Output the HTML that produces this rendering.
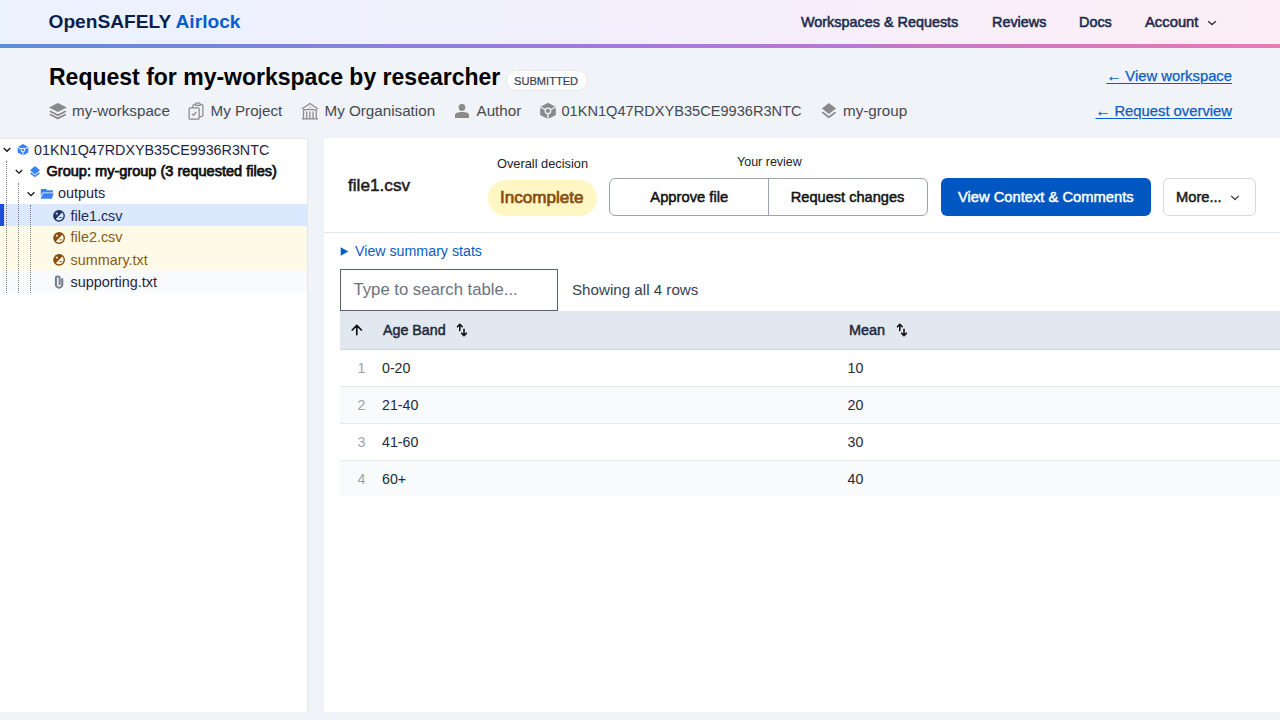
<!DOCTYPE html>
<html><head><meta charset="utf-8">
<style>
*{margin:0;padding:0;box-sizing:border-box}
html,body{width:1280px;height:720px;overflow:hidden;background:#f0f3f8;font-family:"Liberation Sans",sans-serif;position:relative}
.a{position:absolute}
.t{position:absolute;white-space:nowrap;line-height:20px}
.b{font-weight:bold}
#hdr{left:0;top:0;width:1280px;height:44px;background:linear-gradient(90deg,#eaf2fe 0%,#f3effc 50%,#fdeef6 100%)}
#hline{left:0;top:44px;width:1280px;height:4px;background:linear-gradient(90deg,#5a8fd6 0%,#a877db 50%,#e87ab4 100%)}
.nav{font-size:14.4px;color:#1c2b4d;-webkit-text-stroke:0.55px #1c2b4d}
.meta{font-size:15.2px;color:#464850}
.lnk{font-size:14.8px;color:#0b5cc4;text-decoration:underline;text-underline-offset:1.5px;text-decoration-thickness:1.4px;-webkit-text-stroke:0.25px #0b5cc4}
#lp{left:0;top:138px;width:308px;height:574px;background:#fff;border-top:1px solid #e2e5ea;border-right:1px solid #e2e5ea}
#mp{left:324px;top:138px;width:956px;height:574px;background:#fff}
.row{position:absolute;left:0;width:307px;height:22px}
.tr{font-size:14.4px;color:#1e2540}
.dot{position:absolute;width:1px;border-left:1px dotted #777a80}
</style></head><body>
<div id="hdr" class="a"></div>
<div id="hline" class="a"></div>
<div class="t b" style="left:48.5px;top:12.2px;font-size:19.16px;color:#0c1f4a">OpenSAFELY <span style="color:#0a5ad0">Airlock</span></div>
<div class="t nav" style="left:801px;top:11.6px">Workspaces &amp; Requests</div>
<div class="t nav" style="left:992px;top:11.6px">Reviews</div>
<div class="t nav" style="left:1079px;top:11.6px">Docs</div>
<div class="t nav" style="left:1145px;top:11.6px;font-size:14.8px">Account</div>
<svg class="a" style="left:1207px;top:19px" width="10" height="8" viewBox="0 0 10 8"><path d="M1.2 2.2 L5 5.6 L8.8 2.2" fill="none" stroke="#333" stroke-width="1.35"/></svg>

<div class="t b" style="left:49px;top:66.8px;font-size:23px;color:#000">Request for my-workspace by researcher</div>
<div class="a" style="left:505.5px;top:70.2px;width:82px;height:21.3px;background:#fff;border:1px solid #e3e6eb;border-radius:11px"></div>
<div class="t" style="left:514px;top:70.8px;font-size:11.1px;color:#334155;-webkit-text-stroke:0.2px #334155">SUBMITTED</div>

<div class="t meta" style="left:72px;top:100.7px">my-workspace</div>
<div class="t meta" style="left:210.5px;top:100.7px">My Project</div>
<div class="t meta" style="left:324.5px;top:100.7px">My Organisation</div>
<div class="t meta" style="left:476.5px;top:100.7px">Author</div>
<div class="t meta" style="left:561.5px;top:100.7px;font-size:14.6px">01KN1Q47RDXYB35CE9936R3NTC</div>
<div class="t meta" style="left:843px;top:100.7px">my-group</div>

<div class="t lnk" style="right:48px;top:65.8px">&larr; View workspace</div>
<div class="t lnk" style="right:48px;top:100.9px">&larr; Request overview</div>


<svg class="a" style="left:0;top:0" width="1280" height="720" viewBox="0 0 1280 720">
<g fill="#8a8a8a">
<polygon points="49,107.4 57.9,102.9 66.9,107.4 57.9,111.9"/>
</g>
<g fill="none" stroke="#8a8a8a" stroke-width="1.8" stroke-linecap="round" stroke-linejoin="round">
<polyline points="50.6,111.5 57.9,115.2 65.2,111.5"/>
<polyline points="50.6,114.7 57.9,118.4 65.2,114.7"/>
</g>
<g transform="translate(186,101) scale(0.8333)" fill="none" stroke="#8a8a8a" stroke-width="1.5" stroke-linecap="round" stroke-linejoin="round">
<path d="M11.35 3.836c-.065.21-.1.433-.1.664 0 .414.336.75.75.75h4.5a.75.75 0 0 0 .75-.75 2.25 2.25 0 0 0-.1-.664m-5.8 0A2.251 2.251 0 0 1 13.5 2.25H15c1.012 0 1.867.668 2.15 1.586m-5.8 0c-.376.023-.75.05-1.124.08C9.095 4.01 8.25 4.973 8.25 6.108V8.25m8.9-4.414c.376.023.75.05 1.124.08 1.131.094 1.976 1.057 1.976 2.192V16.5A2.25 2.25 0 0 1 18 18.75h-2.25m-7.5-10.5H4.875c-.621 0-1.125.504-1.125 1.125v11.25c0 .621.504 1.125 1.125 1.125h9.75c.621 0 1.125-.504 1.125-1.125V18.75m-7.5-10.5h6.375c.621 0 1.125.504 1.125 1.125v9.375m-8.25-3 1.5 1.5 3-3.75"/>
</g>
<g transform="translate(299.7,101) scale(0.851)" fill="none" stroke="#8a8a8a" stroke-width="1.5" stroke-linecap="round" stroke-linejoin="round">
<path d="M12 21v-8.25M15.75 21v-8.25M8.25 21v-8.25M3 9l9-6 9 6m-1.5 12V10.332A48.36 48.36 0 0 0 12 9.75c-2.551 0-5.056.2-7.5.582V21M3 21h18M12 6.75h.008v.008H12V6.75Z"/>
</g>
<g fill="#8a8a8a">
<ellipse cx="462" cy="107.4" rx="3.3" ry="3.4"/>
<path d="M455,118 L455,115.2 C455,113 457.5,111.9 462,111.9 C466.5,111.9 469,113 469,115.2 L469,118 Z"/>
</g>
<g>
<polygon fill="#8a8a8a" points="548,102.8 555.8,107 555.8,115 548,119 540.2,115 540.2,107"/>
<g stroke="#f0f3f8" stroke-width="1.4"><line x1="547.9" y1="111" x2="540.2" y2="107"/><line x1="547.9" y1="111" x2="555.8" y2="107"/><line x1="547.9" y1="111" x2="547.9" y2="119.5"/></g>
<circle cx="547.9" cy="110.9" r="3.4" fill="#f0f3f8"/>
<circle cx="547.9" cy="110.9" r="2.1" fill="#8a8a8a"/>
</g>
<g fill="#8a8a8a">
<polygon points="821.9,108.4 828.9,102.9 836.1,108.4 828.9,113.9"/>
</g>
<g fill="none" stroke="#8a8a8a" stroke-width="1.8" stroke-linecap="round" stroke-linejoin="round">
<polyline points="822.9,112.6 828.9,117.2 835,112.6"/>
</g>
</svg>

<div id="lp" class="a"></div>
<div id="mp" class="a"></div>

<div class="a" style="left:0;top:204px;width:307px;height:22px;background:#dbe8fd"></div>
<div class="a" style="left:0;top:204px;width:4px;height:22px;background:#1d4ed8"></div>
<div class="a" style="left:0;top:226px;width:307px;height:44px;background:#fefae8"></div>
<div class="a" style="left:0;top:270px;width:307px;height:22px;background:#f8fafc"></div>
<svg class="a" style="left:0;top:0" width="40" height="300" viewBox="0 0 40 300"><g stroke="#777a80" stroke-width="1" stroke-dasharray="1 1"><line x1="6.5" y1="162" x2="6.5" y2="293"/><line x1="18.5" y1="184" x2="18.5" y2="293"/><line x1="30.5" y1="206" x2="30.5" y2="293"/></g><g fill="#777a80"><rect x="6" y="161" width="1" height="1"/><rect x="18" y="183" width="1" height="1"/><rect x="30" y="205" width="1" height="1"/></g></svg>
<div class="t tr" style="left:34px;top:139.7px;font-size:14.3px">01KN1Q47RDXYB35CE9936R3NTC</div>
<div class="t tr" style="left:46.5px;top:161.3px;font-size:14.55px;color:#111;-webkit-text-stroke:0.75px #111">Group: my-group (3 requested files)</div>
<div class="t tr" style="left:58px;top:183.3px">outputs</div>
<div class="t tr" style="left:70.5px;top:205.8px;color:#1e2a50">file1.csv</div>
<div class="t tr" style="left:70.5px;top:227.4px;color:#8a5a14">file2.csv</div>
<div class="t tr" style="left:70.5px;top:249.6px;color:#8a5a14">summary.txt</div>
<div class="t tr" style="left:70.5px;top:272.1px;color:#1e2540">supporting.txt</div>
<svg class="a" style="left:0;top:0" width="320" height="300" viewBox="0 0 320 300">
<g fill="none" stroke="#111" stroke-width="1.25" stroke-linecap="butt">
<polyline points="3.7,148 7,151.3 10.3,148"/>
<polyline points="15.8,170 19,173.2 22.2,170"/>
<polyline points="27.6,192.3 31,195.6 34.4,192.3"/>
</g>
<g>
<polygon fill="#3b82f6" points="23,143.9 28.3,146.9 28.3,152.6 23,155.6 17.7,152.6 17.7,146.9"/>
<g stroke="#fff" stroke-width="1"><line x1="22.9" y1="150" x2="17.7" y2="147"/><line x1="22.9" y1="150" x2="28.3" y2="147"/><line x1="22.9" y1="150" x2="22.9" y2="156"/></g>
<circle cx="22.9" cy="150" r="2.2" fill="#fff"/>
<circle cx="22.9" cy="150" r="1.2" fill="#3b82f6"/>
</g>
<polygon fill="#3b82f6" points="30,170.3 34.9,166.1 40,170.3 34.9,174.4"/>
<polyline fill="none" stroke="#3b82f6" stroke-width="1.6" stroke-linejoin="miter" points="30.6,172.9 34.9,176.3 39.4,172.9"/>
<path fill="#3b82f6" d="M40.8,189.5 Q40.8,189 41.3,189 L46.2,189 L47.2,190.3 L52.4,190.3 Q52.9,190.3 52.9,190.8 L52.9,192.4 L43,192.4 Q42.3,192.4 42.1,193 L40.8,196.8 Z"/>
<path fill="#3b82f6" d="M43,193.3 L53.7,193.3 L52,198.2 Q51.8,198.8 51.2,198.8 L40.8,198.8 L40.8,198.5 Z"/>
<g>
<circle cx="59" cy="215.8" r="5.2" fill="#dbe8fd" stroke="#1e3465" stroke-width="1.4"/>
<path d="M55.32,219.48 A5.2,5.2 0 0 1 62.68,212.12 Z" fill="#1e3465"/>
<path d="M55.70,213.60 h2.2 M56.80,212.50 v2.2" stroke="#dbe8fd" stroke-width="0.9"/>
<path d="M59.3,217.6 h2.5" stroke="#1e3465" stroke-width="0.9"/>
</g><g>
<circle cx="59.1" cy="238" r="5.2" fill="#fefae8" stroke="#8b4c0c" stroke-width="1.4"/>
<path d="M55.42,241.68 A5.2,5.2 0 0 1 62.78,234.32 Z" fill="#8b4c0c"/>
<path d="M55.80,235.80 h2.2 M56.90,234.70 v2.2" stroke="#fefae8" stroke-width="0.9"/>
<path d="M59.4,239.8 h2.5" stroke="#8b4c0c" stroke-width="0.9"/>
</g><g>
<circle cx="59.1" cy="259.8" r="5.2" fill="#fefae8" stroke="#8b4c0c" stroke-width="1.4"/>
<path d="M55.42,263.48 A5.2,5.2 0 0 1 62.78,256.12 Z" fill="#8b4c0c"/>
<path d="M55.80,257.60 h2.2 M56.90,256.50 v2.2" stroke="#fefae8" stroke-width="0.9"/>
<path d="M59.4,261.6 h2.5" stroke="#8b4c0c" stroke-width="0.9"/>
</g>
<path fill="none" stroke="#475569" stroke-width="1.9" stroke-linecap="round" d="M59.6,284 V278.2 A1.85,1.85 0 0 0 55.9,278.2 V284.4 A3.2,3.2 0 0 0 62.3,284.4 V279.2"/><path fill="none" stroke="#c4cad3" stroke-width="0.55" stroke-linecap="round" d="M59.6,284 V278.2 A1.85,1.85 0 0 0 55.9,278.2 V284.4 A3.2,3.2 0 0 0 62.3,284.4 V279.2"/>
</svg>



<div class="t" style="left:348px;top:174.6px;font-size:17.2px;color:#1a1a1a;-webkit-text-stroke:0.5px #1a1a1a">file1.csv</div>
<div class="t" style="left:497px;top:153.7px;font-size:12.8px;color:#222">Overall decision</div>
<div class="t" style="left:737px;top:152.2px;font-size:12.5px;color:#222">Your review</div>
<div class="a" style="left:488px;top:180px;width:109px;height:36px;border-radius:18px;background:#fef6c3"></div>
<div class="t" style="left:500px;top:188.4px;font-size:17.1px;color:#854d0e;-webkit-text-stroke:0.7px #854d0e">Incomplete</div>
<div class="a" style="left:609px;top:178px;width:319px;height:38px;border:1px solid #9aa3b2;border-radius:6px;background:#fff"></div>
<div class="a" style="left:768px;top:178px;width:1px;height:38px;background:#9aa3b2"></div>
<div class="t" style="left:650.3px;top:187.2px;font-size:14.75px;color:#111;-webkit-text-stroke:0.5px #111">Approve file</div>
<div class="t" style="left:790.8px;top:187.2px;font-size:14.6px;color:#111;-webkit-text-stroke:0.5px #111">Request changes</div>
<div class="a" style="left:941px;top:178px;width:210px;height:38px;border-radius:6px;background:#0057c2"></div>
<div class="t" style="left:958px;top:187.2px;font-size:14.72px;color:#fff;-webkit-text-stroke:0.45px #fff">View Context &amp; Comments</div>
<div class="a" style="left:1163px;top:178px;width:93px;height:38px;border:1px solid #d4d8de;border-radius:6px;background:#fff"></div>
<div class="t" style="left:1176px;top:187.2px;font-size:14.7px;color:#1a1a1a;-webkit-text-stroke:0.5px #1a1a1a">More...</div>
<div class="a" style="left:324px;top:231.5px;width:956px;height:1px;background:#e2e8f0"></div>

<div class="t" style="left:355px;top:241.4px;font-size:14.23px;color:#0b5cc4">View summary stats</div>
<div class="a" style="left:340px;top:269px;width:218px;height:42px;border:1px solid #5a616d;background:#fff"></div>
<div class="t" style="left:353.5px;top:280.4px;font-size:16.7px;color:#6b7280">Type to search table...</div>
<div class="t" style="left:572px;top:279.7px;font-size:15.17px;color:#374151">Showing all 4 rows</div>

<div class="a" style="left:340px;top:311px;width:940px;height:39px;background:#e2e8f0;border-bottom:1px solid #cdd5e0"></div>
<div class="t" style="left:383px;top:320.1px;font-size:14.25px;color:#1e293b;-webkit-text-stroke:0.5px #1e293b">Age Band</div>
<div class="t" style="left:849px;top:320.4px;font-size:14.45px;color:#1e293b;-webkit-text-stroke:0.5px #1e293b">Mean</div>
<div class="a" style="left:340px;top:386px;width:940px;height:1px;background:#e2e8f0"></div>
<div class="a" style="left:340px;top:387px;width:940px;height:36px;background:#f8fafc"></div>
<div class="a" style="left:340px;top:423px;width:940px;height:1px;background:#e2e8f0"></div>
<div class="a" style="left:340px;top:460px;width:940px;height:1px;background:#e2e8f0"></div>
<div class="a" style="left:340px;top:461px;width:940px;height:35.5px;background:#f8fafc"></div>
<div class="t" style="left:357.5px;top:357.9px;font-size:14.2px;color:#9ca3af">1</div>
<div class="t" style="left:382px;top:357.9px;font-size:14.2px;color:#1e293b">0-20</div>
<div class="t" style="left:847.5px;top:357.9px;font-size:14.2px;color:#1e293b">10</div>
<div class="t" style="left:357.5px;top:394.9px;font-size:14.2px;color:#9ca3af">2</div>
<div class="t" style="left:382px;top:394.9px;font-size:14.2px;color:#1e293b">21-40</div>
<div class="t" style="left:847.5px;top:394.9px;font-size:14.2px;color:#1e293b">20</div>
<div class="t" style="left:357.5px;top:431.9px;font-size:14.2px;color:#9ca3af">3</div>
<div class="t" style="left:382px;top:431.9px;font-size:14.2px;color:#1e293b">41-60</div>
<div class="t" style="left:847.5px;top:431.9px;font-size:14.2px;color:#1e293b">30</div>
<div class="t" style="left:357.5px;top:468.9px;font-size:14.2px;color:#9ca3af">4</div>
<div class="t" style="left:382px;top:468.9px;font-size:14.2px;color:#1e293b">60+</div>
<div class="t" style="left:847.5px;top:468.9px;font-size:14.2px;color:#1e293b">40</div>

<svg class="a" style="left:320px;top:140px" width="960" height="220" viewBox="320 140 960 220">
<polygon fill="#0b5cc4" points="340.7,247.2 348.3,251.45 340.7,255.7"/>
<polyline fill="none" stroke="#404040" stroke-width="1.3" points="1231.2,195.9 1235,199.5 1238.8,195.9"/>
<g fill="none" stroke="#111" stroke-width="1.5" stroke-linecap="round" stroke-linejoin="round">
<path d="M356.8,334.6 V325.6 M352.2,330 L356.8,325.3 L361.4,330" stroke-width="1.7"/>
<path d="M459.8,330.6 V325.5 M457.4,326.7 L459.8,324.3 L462.2,326.7 M464,329.3 V334.4 M461.6,333.2 L464,335.6 L466.4,333.2" stroke-width="1.6"/>
<path d="M899.8,330.6 V325.5 M897.4,326.7 L899.8,324.3 L902.2,326.7 M904,329.3 V334.4 M901.6,333.2 L904,335.6 L906.4,333.2" stroke-width="1.6"/>
</g>
</svg>
</body></html>
